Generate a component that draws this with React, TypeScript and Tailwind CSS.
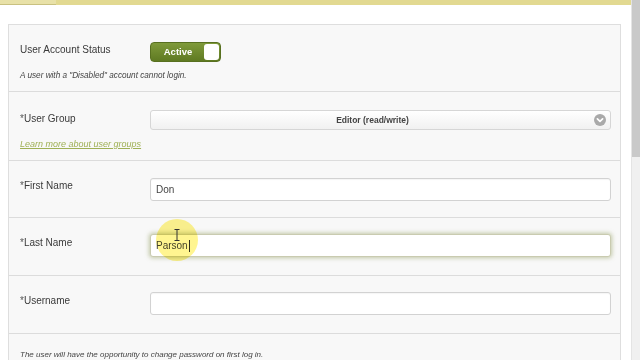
import React from 'react';

const font = { fontFamily: '"Liberation Sans", Arial, sans-serif' };

function Label({ text, req }: { text: string; req?: boolean }) {
  return (
    <div className="w-[130px] shrink-0 text-[10px] text-[#3a3a3a] leading-none">
      {req && <span className="text-[#555]">*</span>}
      {text}
    </div>
  );
}

function TextInput({ value, focused }: { value?: string; focused?: boolean }) {
  return (
    <div
      className={
        'flex-1 h-[23px] rounded-[3px] bg-white flex items-center px-[5px] text-[10px] text-[#444] ' +
        (focused
          ? 'border border-[#c9cbb0] shadow-[0_0_4px_1px_rgba(150,160,100,0.55)]'
          : 'border border-[#d2d2d2] shadow-[inset_0_1px_1px_rgba(0,0,0,0.04)]')
      }
    >
      {value}
      {focused && <span className="w-px h-[12px] bg-[#333] ml-[1px]" />}
    </div>
  );
}

export default function App() {
  return (
    <div className="w-[640px] h-[360px] overflow-hidden bg-white flex" style={font}>
      <div className="flex-1 flex flex-col">
        {/* top bar */}
        <div className="h-[5px] shrink-0 bg-[#e2d991] flex">
          <div className="w-[56px] h-full bg-[#e8e1a8] border-b border-[#c9c180]" />
        </div>

        <div className="ml-[8px] mr-[10px] mt-[19px] border border-[#dedede] bg-[#f8f8f8]">
          {/* status */}
          <div className="h-[67px] border-b border-[#dcdcdc] pl-[11px] pr-[9px] pt-[17px]">
            <div className="flex items-start">
              <div className="pt-[3px]">
                <Label text="User Account Status" />
              </div>
              <div className="w-[71px] h-[20px] rounded-[4px] bg-gradient-to-b from-[#7f9a3a] to-[#5f7a22] border border-[#587020] flex items-center p-[1px]">
                <span className="flex-1 text-center text-white text-[9.5px] font-bold">Active</span>
                <span className="w-[15px] h-full rounded-[3px] bg-white" />
              </div>
            </div>
            <div className="mt-[8px] text-[8.2px] italic text-[#444]">
              A user with a "Disabled" account cannot login.
            </div>
          </div>

          {/* user group */}
          <div className="h-[69px] border-b border-[#dcdcdc] pl-[11px] pr-[9px] pt-[18px]">
            <div className="flex items-start">
              <div className="pt-[4px]">
                <Label text="User Group" req />
              </div>
              <div className="flex-1 h-[20px] rounded-[3px] border border-[#d6d6d6] bg-gradient-to-b from-white to-[#f1f1f1] flex items-center pr-[4px]">
                <span className="flex-1 text-center text-[8.5px] font-bold text-[#444]">Editor (read/write)</span>
                <svg width="12" height="12" viewBox="0 0 12 12">
                  <circle cx="6" cy="6" r="6" fill="#a9a9a9" />
                  <path d="M3.4 4.9 L6 7.4 L8.6 4.9" fill="none" stroke="#fff" strokeWidth="1.7" strokeLinecap="round" strokeLinejoin="round" />
                </svg>
              </div>
            </div>
            <div className="mt-[8px] text-[9px] italic underline text-[#9fb055]">
              Learn more about user groups
            </div>
          </div>

          {/* first name */}
          <div className="h-[57px] border-b border-[#dcdcdc] pl-[11px] pr-[9px] pt-[17px] flex items-start">
            <div className="pt-[3px]">
              <Label text="First Name" req />
            </div>
            <TextInput value="Don" />
          </div>

          {/* last name */}
          <div className="relative h-[58px] border-b border-[#dcdcdc] pl-[11px] pr-[9px] pt-[16px] flex items-start">
            <div className="pt-[4px]">
              <Label text="Last Name" req />
            </div>
            <TextInput value="Parson" focused />
            {/* cursor highlight */}
            <div className="absolute left-[147px] top-[1px] w-[42px] h-[42px] rounded-full bg-[rgba(255,238,70,0.6)] mix-blend-multiply pointer-events-none" />
            <svg className="absolute left-[165px] top-[11px]" width="6" height="12" viewBox="0 0 6 12">
              <path d="M0.5 0.5 H5.5 M3 0.5 V11.5 M0.5 11.5 H5.5" stroke="#333" strokeWidth="1" fill="none" />
            </svg>
          </div>

          {/* username */}
          <div className="h-[58px] border-b border-[#dcdcdc] pl-[11px] pr-[9px] pt-[16px] flex items-start">
            <div className="pt-[4px]">
              <Label text="Username" req />
            </div>
            <TextInput />
          </div>

          {/* note */}
          <div className="h-[40px] pl-[11px] pt-[15px] text-[8px] italic text-[#444]">
            The user will have the opportunity to change password on first log in.
          </div>
        </div>
      </div>

      {/* scrollbar */}
      <div className="w-[9px] h-full bg-[#f0f0f0] border-l border-[#e4e4e4] flex flex-col">
        <div className="h-[157px] w-full bg-[#c9c9c9]" />
      </div>
    </div>
  );
}
